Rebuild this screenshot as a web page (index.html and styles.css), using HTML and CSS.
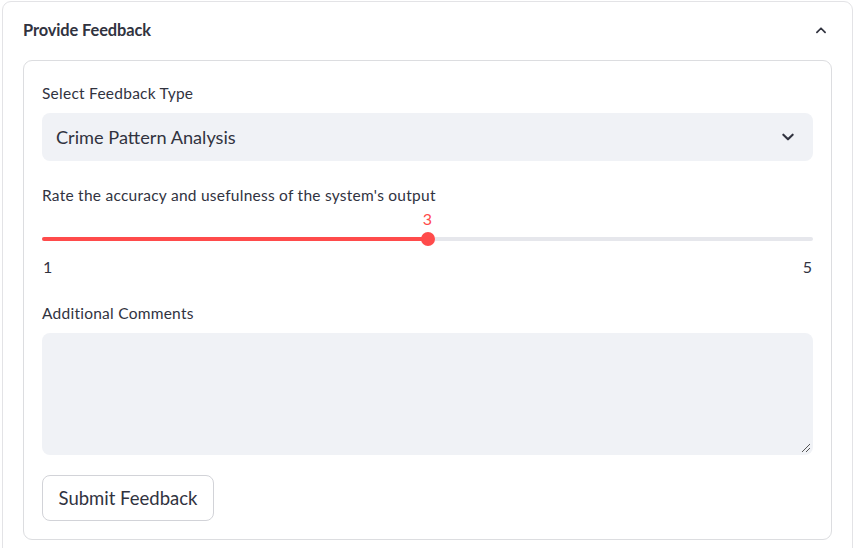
FILE: index.html
```html
<!DOCTYPE html>
<html>
<head>
<meta charset="utf-8">
<link rel="stylesheet" href="styles.css">
</head>
<body>
<div class="expander">
  <div class="exp-header">
    <span class="exp-title">Provide Feedback</span>
    <svg class="chev-up" width="14" height="14" viewBox="0 0 24 24"><path d="M5 16 L12 9 L19 16" fill="none" stroke="#31333f" stroke-width="3" stroke-linecap="round" stroke-linejoin="round"/></svg>
  </div>
  <div class="form">
    <div class="field">
      <label class="lbl">Select Feedback Type</label>
      <div class="select">
        <span>Crime Pattern Analysis</span>
        <svg width="16" height="16" viewBox="0 0 24 24"><path d="M5 8.5 L12 15.5 L19 8.5" fill="none" stroke="#31333f" stroke-width="3.2" stroke-linecap="round" stroke-linejoin="round"/></svg>
      </div>
    </div>
    <div class="field slider-field">
      <label class="lbl">Rate the accuracy and usefulness of the system's output</label>
      <div class="slider">
        <div class="track">
          <div class="fill" style="width:50%"></div>
          <div class="thumb" style="left:50%"><span class="val">3</span></div>
        </div>
      </div>
      <div class="ticks"><span>1</span><span>5</span></div>
    </div>
    <div class="field">
      <label class="lbl">Additional Comments</label>
      <div class="textarea">
        <svg class="grip" width="10" height="10" viewBox="0 0 10 10"><path d="M9 1 L1 9 M9 5 L5 9" stroke="#555" stroke-width="1" fill="none"/></svg>
      </div>
    </div>
    <button class="btn">Submit Feedback</button>
  </div>
</div>
</body>
</html>
```

FILE: styles.css
```css
* { box-sizing: border-box; }
html, body { margin: 0; padding: 0; background: #fff; }
body {
  font-family: "Lato", "Source Sans Pro", sans-serif;
  color: #31333f;
  width: 862px;
  height: 548px;
  overflow: hidden;
}
.expander {
  margin: 1px 0 0 2px;
  width: 851px;
  height: 600px;
  border: 1px solid #e3e3e6;
  border-radius: 9px;
  padding: 0 20px 0 20px;
}
.exp-header {
  height: 58px;
  display: flex;
  align-items: center;
  justify-content: space-between;
  padding-bottom: 4px;
}
.exp-title {
  font-size: 16.4px;
  font-weight: 700;
  letter-spacing: -0.1px;
}
.chev-up { margin-right: 4px; margin-top: 1px; }
.form {
  border: 1px solid #dcdde0;
  border-radius: 9px;
  height: 480px;
  padding: 18px 18px 0 18px;
  display: flex;
  flex-direction: column;
}
.field { display: flex; flex-direction: column; }
.lbl {
  font-size: 15.5px;
  letter-spacing: 0.25px;
  line-height: 28px;
  height: 34px;
}
.select {
  height: 48px;
  background: #f0f2f6;
  border-radius: 8px;
  display: flex;
  align-items: center;
  justify-content: space-between;
  padding: 0 17px 0 14px;
  font-size: 18.2px;
  margin-bottom: 20px;
}
.slider { height: 34px; padding-top: 12px; position: relative; margin-top: 10px; }
.track {
  position: relative;
  height: 4px;
  background: #e6e7ec;
  border-radius: 2px;
}
.fill {
  height: 4px;
  background: #ff4b4b;
  border-radius: 2px;
}
.thumb {
  position: absolute;
  top: -5px;
  width: 14px;
  height: 14px;
  margin-left: -7px;
  border-radius: 50%;
  background: #ff4b4b;
}
.val {
  position: absolute;
  bottom: 18px;
  left: 50%;
  transform: translateX(-50%);
  color: #ff4b4b;
  font-size: 16px;
}
.ticks {
  display: flex;
  justify-content: space-between;
  font-size: 16px;
  padding: 0 1px 0 1px;
  height: 41px;
  line-height: 18px;
  margin-top: -1px;
}
.textarea {
  height: 122px;
  background: #f0f2f6;
  border-radius: 8px;
  position: relative;
  margin-bottom: 20px;
}
.grip { position: absolute; right: 2px; bottom: 2px; }
.btn {
  align-self: flex-start;
  width: 172px;
  height: 46px;
  background: #fff;
  border: 1px solid #d2d3d8;
  border-radius: 8px;
  font-family: inherit;
  font-size: 18.5px;
  color: #31333f;
}
```
